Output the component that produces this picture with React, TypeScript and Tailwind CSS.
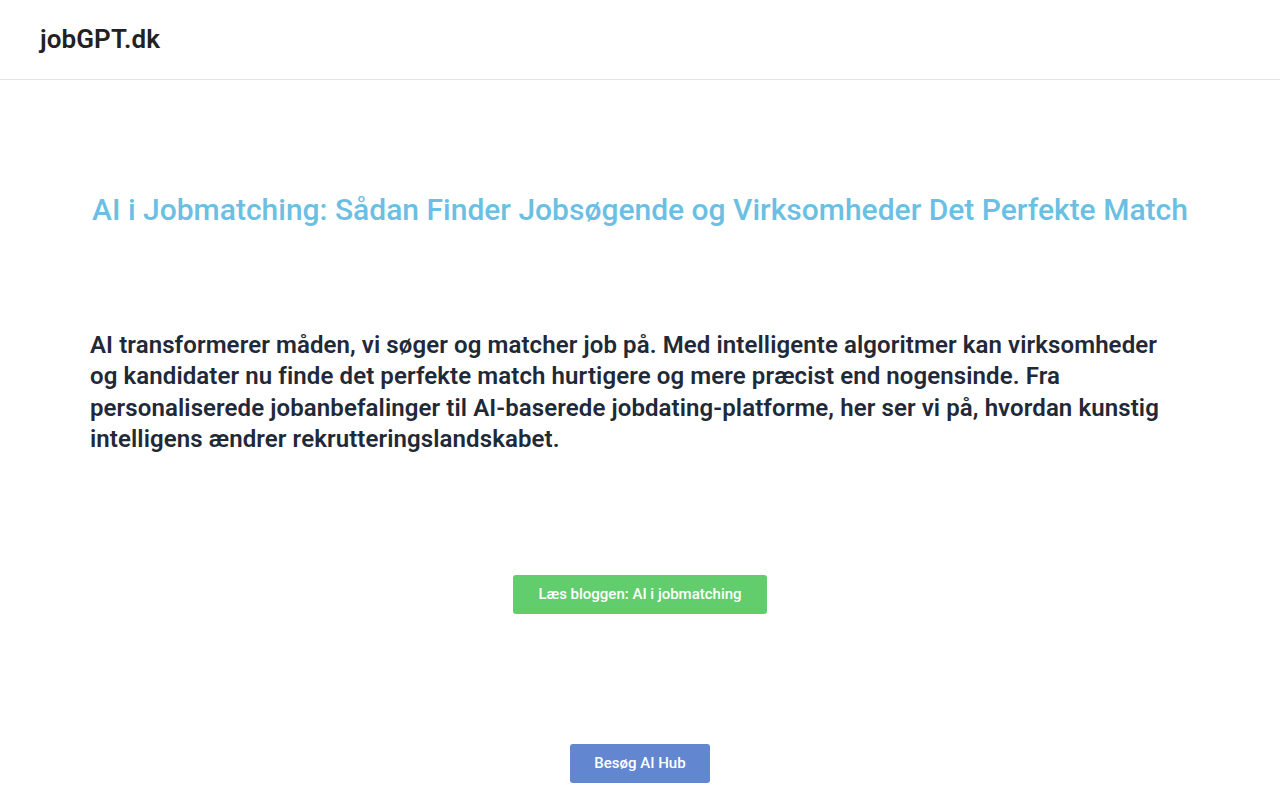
export default function App() {
  return (
    <div className="min-h-screen bg-white font-['Roboto',sans-serif]">
      <header className="h-20 border-b border-[#e5e5e5] flex items-center px-10">
        <div className="text-[26px] font-semibold text-[#222222] tracking-[0.1px]">jobGPT.dk</div>
      </header>

      <main className="px-[90px]">
        <h1 className="pt-[112px] text-center text-[30px] leading-9 font-medium text-[#6bbfe3]">
          AI i Jobmatching: Sådan Finder Jobsøgende og Virksomheder Det Perfekte Match
        </h1>

        <p className="mt-[102px] text-[24px] leading-[31.3px] font-semibold text-[#1f2937] tracking-[0.1px]">
          AI transformerer måden, vi søger og matcher job på. Med intelligente algoritmer kan virksomheder og kandidater nu finde det perfekte match hurtigere og mere præcist end nogensinde. Fra personaliserede jobanbefalinger til AI-baserede jobdating-platforme, her ser vi på, hvordan kunstig intelligens ændrer rekrutteringslandskabet.
        </p>

        <div className="mt-[120px] flex justify-center">
          <a className="h-[39px] px-[25px] flex items-center rounded-[3px] bg-[#62cd6d] text-white text-[15px] font-medium">
            Læs bloggen: AI i jobmatching
          </a>
        </div>

        <div className="mt-[130px] flex justify-center">
          <a className="h-[39px] px-6 flex items-center rounded-[3px] bg-[#6286d0] text-white text-[15px] font-medium">
            Besøg AI Hub
          </a>
        </div>
      </main>
    </div>
  );
}
